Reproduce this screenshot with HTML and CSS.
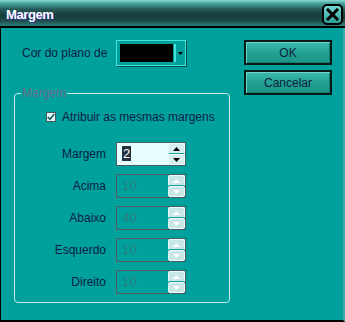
FILE: index.html
```html
<!DOCTYPE html>
<html lang="pt">
<head>
  <meta charset="UTF-8" />
  <title>Margem</title>
  <link rel="stylesheet" href="styles.css">
</head>
<body>

  <div class="window">
    <div class="titlebar">
      <span class="title">Margem</span>
      <button class="close" aria-label="Fechar">
        <svg width="13" height="13" viewBox="0 0 13 13"><path d="M2 2 L11 11 M11 2 L2 11" stroke="#000" stroke-width="3" stroke-linecap="square"/></svg>
      </button>
    </div>

    <div class="content">
      <div class="main">
        <div class="color-row">
          <span class="label">Cor do plano de</span>
          <div class="combo">
            <span class="swatch"></span>
            <span class="combo-arrow">
              <svg width="5" height="3" viewBox="0 0 5 3"><polygon points="0,0 5,0 2.5,3" fill="#000"/></svg>
            </span>
          </div>
        </div>

        <fieldset class="group">
          <legend>Margem</legend>
          <div class="check">
            <span class="box">
              <svg width="8" height="8" viewBox="0 0 8 8"><polyline points="0.8,4 3,6.3 7.3,1" fill="none" stroke="#165c5c" stroke-width="1.6"/></svg>
            </span>
            Atribuir as mesmas margens
          </div>

          <div class="rows">
            <div class="row">
              <span class="name">Margem</span>
              <div class="spin">
                <span class="value"><span class="selected">2</span></span>
                <span class="arrows">
                  <span class="up"><svg width="7" height="4" viewBox="0 0 7 4"><polygon points="0,4 7,4 3.5,0" /></svg></span>
                  <span class="down"><svg width="7" height="4" viewBox="0 0 7 4"><polygon points="0,0 7,0 3.5,4" /></svg></span>
                </span>
              </div>
            </div>
            <div class="row disabled">
              <span class="name">Acima</span>
              <div class="spin">
                <span class="value">10</span>
                <span class="arrows">
                  <span class="up"><svg width="7" height="4" viewBox="0 0 7 4"><polygon points="0,4 7,4 3.5,0" /></svg></span>
                  <span class="down"><svg width="7" height="4" viewBox="0 0 7 4"><polygon points="0,0 7,0 3.5,4" /></svg></span>
                </span>
              </div>
            </div>
            <div class="row disabled">
              <span class="name">Abaixo</span>
              <div class="spin">
                <span class="value">40</span>
                <span class="arrows">
                  <span class="up"><svg width="7" height="4" viewBox="0 0 7 4"><polygon points="0,4 7,4 3.5,0" /></svg></span>
                  <span class="down"><svg width="7" height="4" viewBox="0 0 7 4"><polygon points="0,0 7,0 3.5,4" /></svg></span>
                </span>
              </div>
            </div>
            <div class="row disabled">
              <span class="name">Esquerdo</span>
              <div class="spin">
                <span class="value">10</span>
                <span class="arrows">
                  <span class="up"><svg width="7" height="4" viewBox="0 0 7 4"><polygon points="0,4 7,4 3.5,0" /></svg></span>
                  <span class="down"><svg width="7" height="4" viewBox="0 0 7 4"><polygon points="0,0 7,0 3.5,4" /></svg></span>
                </span>
              </div>
            </div>
            <div class="row disabled">
              <span class="name">Direito</span>
              <div class="spin">
                <span class="value">10</span>
                <span class="arrows">
                  <span class="up"><svg width="7" height="4" viewBox="0 0 7 4"><polygon points="0,4 7,4 3.5,0" /></svg></span>
                  <span class="down"><svg width="7" height="4" viewBox="0 0 7 4"><polygon points="0,0 7,0 3.5,4" /></svg></span>
                </span>
              </div>
            </div>
          </div>
        </fieldset>
      </div>

      <div class="actions">
        <button class="btn">OK</button>
        <button class="btn">Cancelar</button>
      </div>
    </div>
  </div>

</body>
</html>
```

FILE: styles.css
```css
* {
  margin: 0;
  padding: 0;
  box-sizing: border-box;
}

body {
  width: 345px;
  height: 322px;
  overflow: hidden;
  font-family: 'Liberation Sans', Arial, sans-serif;
  font-size: 12px;
  color: #0e1c44;
  background: #00a19c;
}

.window {
  width: 345px;
  height: 322px;
  display: flex;
  flex-direction: column;
}

.titlebar {
  height: 28px;
  border-bottom: 2px solid #000;
  background: linear-gradient(#90dad2 0, #4ba9a3 3px, #245c5a 9px, #173c3c 15px, #1b4644 20px, #2f7e7a 26px);
  display: flex;
  align-items: flex-start;
  justify-content: space-between;
  padding: 0 2px 0 6px;
}

.title {
  margin-top: 7px;
  font-size: 13px;
  line-height: 16px;
  font-weight: bold;
  letter-spacing: -0.4px;
  color: #fff;
  text-shadow: 1px 1px 0 #3a3aa8;
}

.close {
  margin-top: 4px;
  width: 21px;
  height: 21px;
  border: 2px solid #000;
  border-radius: 5px;
  background: linear-gradient(#74d6ce, #2d9f99);
  display: flex;
  align-items: center;
  justify-content: center;
}

.content {
  flex: 1;
  display: flex;
  border-left: 1px solid #000;
  border-right: 2px solid #3aafa9;
  border-bottom: 2px solid #000;
  padding: 12px 0 0 13px;
}

.main {
  width: 216px;
}

.color-row {
  display: flex;
  align-items: center;
  height: 26px;
  padding-left: 8px;
}

.color-row .label {
  width: 94px;
}

.combo {
  width: 70px;
  height: 26px;
  border: 1px solid #44e2da;
  box-shadow: 1px 1px 0 #0b4c4a;
  display: flex;
  padding: 3px 0 3px 3px;
}

.swatch {
  width: 53px;
  background: #000;
}

.combo-arrow {
  flex: 1;
  margin-left: 1px;
  border-left: 2px solid #44e2da;
  display: flex;
  align-items: center;
  justify-content: center;
}

.group {
  margin-top: 20px;
  width: 216px;
  border: 1px solid #bfeeea;
  border-radius: 4px;
  padding: 0 0 8px;
}

.group legend {
  margin-left: 6px;
  padding: 0 1px;
  line-height: 14px;
  color: #6b6a8c;
}

.check {
  display: flex;
  align-items: center;
  gap: 6px;
  margin: 10px 0 0 31px;
  line-height: 14px;
}

.check .box {
  width: 10px;
  height: 10px;
  border: 1px solid #4a5860;
  background: #e6fbfa;
  display: flex;
  align-items: center;
  justify-content: center;
}

.rows {
  display: flex;
  flex-direction: column;
  gap: 8px;
  margin-top: 18px;
}

.row {
  display: flex;
  align-items: center;
  height: 24px;
}

.row .name {
  width: 91px;
  margin-right: 10px;
  text-align: right;
}

.spin {
  width: 70px;
  height: 24px;
  border: 1px solid #4d5a62;
  background: #e6fffe;
  display: flex;
}

.spin .value {
  flex: 1;
  padding-left: 5px;
  line-height: 22px;
  font-size: 13px;
}

.spin .selected {
  background: #253040;
  color: #fff;
  padding: 0 1px;
}

.arrows {
  width: 17px;
  display: flex;
  flex-direction: column;
}

.arrows span {
  flex: 1;
  display: flex;
  align-items: center;
  justify-content: center;
  background: #d4efed;
  border: 1px solid #e9fbfa;
  border-radius: 2px;
  fill: #000;
}

.arrows .up {
  border-bottom: 1px solid #16a09c;
  border-radius: 2px 2px 0 0;
}

.row.disabled .spin {
  background: transparent;
}

.row.disabled .value {
  color: #2c7d7e;
}

.row.disabled .arrows span {
  background: #c8e8e6;
  fill: #fff;
}

.actions {
  margin-left: 14px;
  display: flex;
  flex-direction: column;
  gap: 5px;
}

.btn {
  width: 88px;
  height: 25px;
  border: 2px solid #061a1a;
  background: linear-gradient(#3cbcae, #23a192 50%, #1a9486);
  box-shadow: inset 1px 1px 0 #6fd4c8, inset -1px -1px 0 #157a70;
  font-family: inherit;
  font-size: 12px;
  color: #0b1f3e;
}
```
